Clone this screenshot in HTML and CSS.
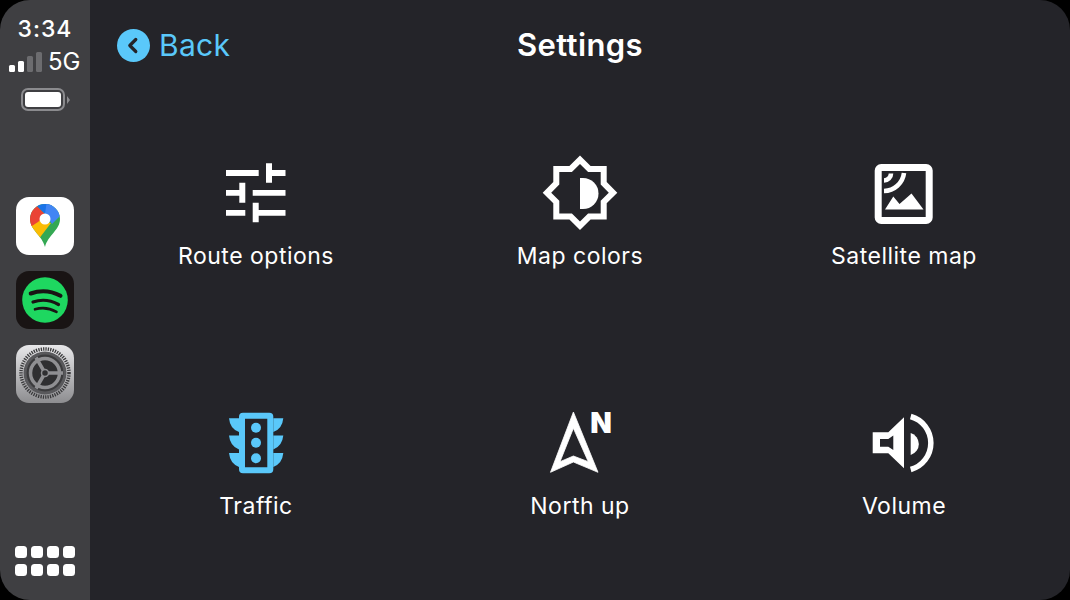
FILE: index.html
```html
<!DOCTYPE html>
<html lang="en">
<head>
<meta charset="utf-8">
<title>Settings</title>
<link rel="stylesheet" href="styles.css">
</head>
<body>
<div class="screen">
  <aside class="sidebar">
    <div class="status">
      <div class="time">3:34</div>
      <div class="signal">
        <div class="bars"><i class="bar b1"></i><i class="bar b2"></i><i class="bar b3 off"></i><i class="bar b4 off"></i></div>
        <span class="net">5G</span>
      </div>
      <div class="battery"><div class="cell"><div class="charge"></div></div><div class="nub"></div></div>
    </div>
    <div class="apps">
      <div class="app maps">
        <svg viewBox="0 0 58 58" width="58" height="58">
          <defs><clipPath id="pin"><path d="M29 7A15 15 0 0 1 44 22C44 33 32 38 29 50C26 38 14 33 14 22A15 15 0 0 1 29 7Z"/></clipPath></defs>
          <g clip-path="url(#pin)">
            <rect x="10" y="3" width="40" height="50" fill="#34a853"/>
            <polygon points="10,32 21,22 35,26 22,43 10,40" fill="#fbbc04"/>
            <polygon points="20,8 30,18 22,25 10,33 8,10" fill="#ea4335"/>
            <polygon points="20,8 29,17 37,10 32,3 20,3" fill="#1a73e8"/>
            <polygon points="29,17 36,27 46,17 46,3 31,3" fill="#4285f4"/>
          </g>
          <circle cx="29" cy="22" r="5.5" fill="#fff"/>
        </svg>
      </div>
      <div class="app spotify">
        <svg viewBox="0 0 58 58" width="58" height="58">
          <circle cx="29" cy="29" r="22.8" fill="#1ed760"/>
          <path class="sp a1" d="M14.7 22.5Q30 17 44.5 24.8"/>
          <path class="sp a2" d="M17 31Q30 26.5 42.5 33.5"/>
          <path class="sp a3" d="M19 38.3Q30 35 40.5 40.8"/>
        </svg>
      </div>
      <div class="app gear">
        <svg viewBox="0 0 58 58" width="58" height="58">
          <circle cx="29" cy="28" r="24" fill="none" stroke="#3a3a3c" stroke-width="3.5" stroke-dasharray="1.3 1.1"/>
          <circle cx="29" cy="28" r="21.5" fill="#59595c"/>
          <circle cx="29" cy="28" r="18.5" fill="#3b3b3d"/>
          <circle cx="29" cy="28" r="14.5" fill="#2f2f31" stroke="#8f8f92" stroke-width="3.5"/>
          <path d="M29 28L47 28M29 28L20 12.5M29 28L20 43.5" stroke="#8f8f92" stroke-width="3.5" fill="none"/>
          <circle cx="29" cy="28" r="3.5" fill="#2f2f31" stroke="#8f8f92" stroke-width="1.5"/>
        </svg>
      </div>
    </div>
    <div class="dots">
      <i></i><i></i><i></i><i></i><i></i><i></i><i></i><i></i>
    </div>
  </aside>
  <main class="main">
    <header class="header">
      <div class="back">
        <svg viewBox="0 0 33 33" width="33" height="33">
          <circle cx="16.5" cy="16.5" r="16.5" fill="#5ac8fa"/>
          <path d="M18.8 10.5L12.8 16.5L18.8 22.5" fill="none" stroke="#242429" stroke-width="3.2" stroke-linecap="round" stroke-linejoin="round"/>
        </svg>
        <span class="back-label">Back</span>
      </div>
      <h1 class="title">Settings</h1>
      <div></div>
    </header>
    <section class="grid">
      <div class="item">
        <svg class="icon" viewBox="1 0 90 85" width="90" height="85">
          <path d="M16 20H48.7V26H16ZM56 13.3H62V20H75.5V26H62V32.7H56ZM16 40H29.3V32.7H35.3V52.7H29.3V45.7H16ZM42.7 40H75.5V45.7H42.7ZM16 60H35.3V65.7H16ZM42.7 52.7H48.7V60H75.5V65.7H48.7V72.3H42.7Z" fill="#fff"/>
        </svg>
        <div class="label">Route options</div>
      </div>
      <div class="item">
        <svg class="icon" viewBox="0 0 90 85" width="90" height="85">
          <path fill-rule="evenodd" d="M45 5.4L55.6 16H71.7V32.1L82.3 42.7L71.7 53.3V69.4H55.6L45 80L34.4 69.4H18.3V53.3L7.7 42.7L18.3 32.1V16H34.4ZM45 13.9L36.9 22H24.3V34.6L16.2 42.7L24.3 50.8V63.4H36.9L45 71.5L53.1 63.4H65.7V50.8L73.8 42.7L65.7 34.6V22H53.1Z" fill="#fff"/>
          <path d="M45 28H48A15.5 15.5 0 0 1 48 59H45Z" fill="#fff"/>
        </svg>
        <div class="label">Map colors</div>
      </div>
      <div class="item">
        <svg class="icon" viewBox="-1 0 90 85" width="90" height="85">
          <rect x="18.2" y="17.5" width="51" height="53" rx="3" fill="none" stroke="#fff" stroke-width="7"/>
          <path d="M31 23.5A7 7 0 0 1 24 30.5M44 23A20.5 20.5 0 0 1 24 41" fill="none" stroke="#fff" stroke-width="4.6"/>
          <polygon points="25,59.5 33.3,46.5 39.5,54 51.5,43.5 63.5,59.5" fill="#fff"/>
        </svg>
        <div class="label">Satellite map</div>
      </div>
      <div class="item">
        <svg class="icon" viewBox="1 0 90 85" width="90" height="85">
          <g fill="#5ac8fa">
            <path fill-rule="evenodd" d="M33 12.7H59.3A4 4 0 0 1 63.3 16.7V69.3A4 4 0 0 1 59.3 73.3H33A4 4 0 0 1 29 69.3V16.7A4 4 0 0 1 33 12.7ZM35 18.7V67.3H57.3V18.7Z"/>
            <circle cx="46" cy="27.7" r="5"/><circle cx="46" cy="42.7" r="5"/><circle cx="46" cy="58.3" r="5"/>
            <path d="M29 18.3H19Q20 29 29 32ZM29 35.5H19Q20 46 29 49.5ZM29 53H19Q20 63.5 29 67ZM63.3 18.3H73.3Q72.3 29 63.3 32ZM63.3 35.5H73.3Q72.3 46 63.3 49.5ZM63.3 53H73.3Q72.3 63.5 63.3 67Z"/>
          </g>
        </svg>
        <div class="label">Traffic</div>
      </div>
      <div class="item">
        <svg class="icon" viewBox="0 0 90 85" width="90" height="85">
          <path fill-rule="evenodd" d="M38.4 12L63 72.300L38.400 62L15.500 72.300ZM38.400 28.300L25 61.700L38.400 56L53.300 61.700Z" fill="#fff" stroke="#fff" stroke-width="0.8" stroke-linejoin="round"/>
          <text class="north" x="66" y="33.300" text-anchor="middle">N</text>
        </svg>
        <div class="label">North up</div>
      </div>
      <div class="item">
        <svg class="icon" viewBox="-1 0 90 85" width="90" height="85">
          <path fill-rule="evenodd" d="M12.700 32.300H28.300L44 17.300V68.300L28.300 53.300H12.700ZM20 39V46.700H28.300L33.300 50V35.500L28.300 39Z" fill="#fff"/>
          <path d="M50.700 33A11.500 11.500 0 0 1 50.700 55Z" fill="#fff"/>
          <path d="M50.700 16.500A27.500 27.500 0 0 1 50.700 69.500" fill="none" stroke="#fff" stroke-width="5.500"/>
        </svg>
        <div class="label">Volume</div>
      </div>
    </section>
  </main>
</div>
</body>
</html>
```

FILE: styles.css
```css
* { box-sizing: border-box; }
html, body { margin: 0; padding: 0; background: #000; }
body { width: 1070px; height: 600px; overflow: hidden; font-family: Inter, "Liberation Sans", sans-serif; color: #fff; }
.screen { display: flex; width: 1070px; height: 600px; border-radius: 30px; overflow: hidden; }

.sidebar { width: 90px; flex: none; background: #3f3f42; display: flex; flex-direction: column; align-items: center; padding-top: 16px; padding-bottom: 24px; }
.status { display: flex; flex-direction: column; align-items: center; width: 100%; }
.time { font-size: 23px; line-height: 27px; font-weight: 500; letter-spacing: 1px; }
.signal { display: flex; align-items: flex-end; width: 100%; padding-left: 9px; height: 29px; }
.bars { display: flex; align-items: flex-end; gap: 3px; height: 20px; }
.bar { display: block; width: 6px; background: #fff; border-radius: 1.5px; }
.bar.off { background: #6c6c6f; }
.b1 { height: 7px; }
.b2 { height: 11px; }
.b3 { height: 16px; }
.b4 { height: 20px; }
.net { font-size: 24px; line-height: 20px; margin-left: 6px; font-weight: 400; }
.battery { display: flex; align-items: center; margin-top: 16px; margin-right: 0; }
.cell { width: 44px; height: 23px; border: 2px solid #8b8b8e; border-radius: 7px; padding: 2px; }
.charge { width: 100%; height: 100%; background: #fff; border-radius: 3px; }
.nub { width: 0; height: 0; margin-left: 2px; border-left: 3px solid #8b8b8e; border-top: 4px solid transparent; border-bottom: 4px solid transparent; }

.apps { display: flex; flex-direction: column; gap: 16px; margin-top: 86px; }
.app { width: 58px; height: 58px; border-radius: 13px; overflow: hidden; }
.app svg { display: block; }
.maps { background: #fff; }
.spotify { background: #191414; }
.gear { background: linear-gradient(#e8e8ea, #8d8d90); }
.sp { fill: none; stroke: #191414; stroke-linecap: round; }
.a1 { stroke-width: 4; }
.a2 { stroke-width: 3.2; }
.a3 { stroke-width: 2.6; }

.dots { margin-top: auto; display: grid; grid-template-columns: repeat(4, 12px); grid-auto-rows: 12px; gap: 6px 4px; }
.dots i { display: block; background: #fff; border-radius: 3.5px; }

.main { flex: 1; background: #242429; display: flex; flex-direction: column; }
.header { flex: none; display: grid; grid-template-columns: 1fr auto 1fr; align-items: center; height: 90px; padding: 0 27px; }
.back { display: flex; align-items: center; gap: 9px; color: #5ac8fa; }
.back svg { display: block; }
.back-label { font-size: 30px; line-height: 36px; font-weight: 400; letter-spacing: 0.3px; }
.title { margin: 0; font-size: 31px; line-height: 36px; font-weight: 600; letter-spacing: 0.4px; }

.grid { flex: 1; min-height: 0; display: grid; grid-template-columns: repeat(3, 324px); grid-template-rows: 250px 200px; padding-left: 4px; padding-top: 60px; }
.item { display: flex; flex-direction: column; align-items: center; }
.icon { display: block; }
.label { margin-top: 7px; font-size: 23px; line-height: 28px; font-weight: 400; letter-spacing: 0.5px; }
.north { fill: #fff; font-family: Inter, "Liberation Sans", sans-serif; font-size: 28px; font-weight: 900; }
```
